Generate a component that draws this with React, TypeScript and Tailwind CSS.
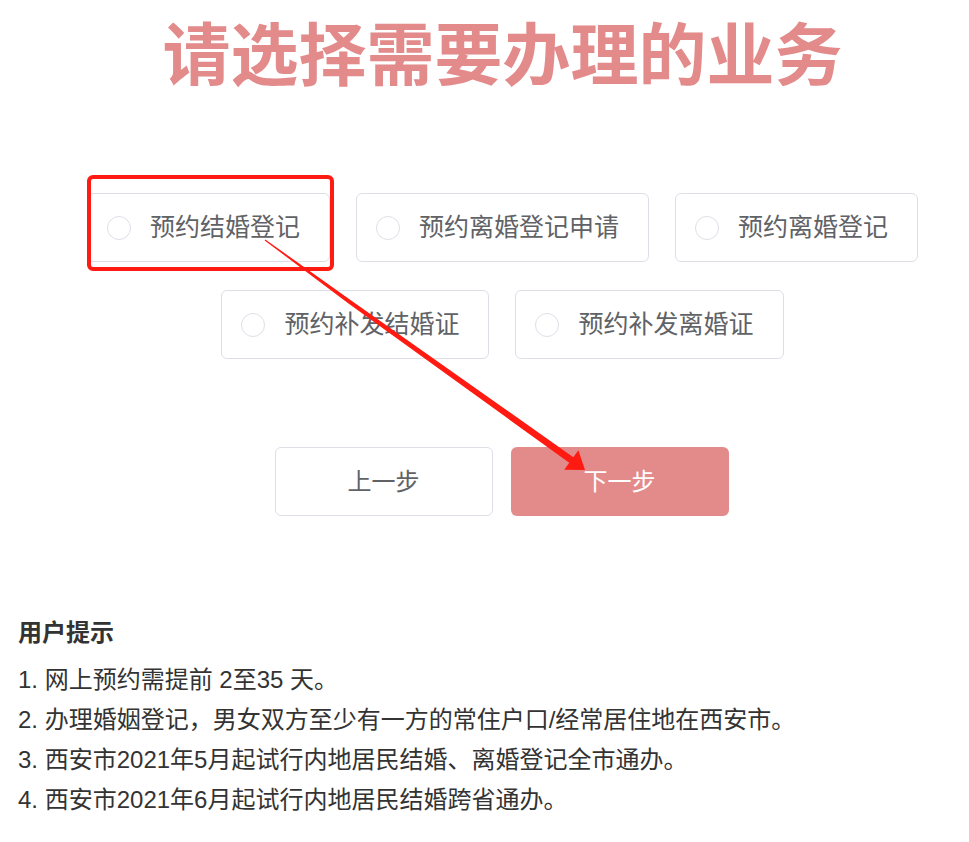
import { useState } from "react";

const options = [
  ["预约结婚登记", "预约离婚登记申请", "预约离婚登记"],
  ["预约补发结婚证", "预约补发离婚证"],
];

const tips = [
  "1. 网上预约需提前 2至35 天。",
  "2. 办理婚姻登记，男女双方至少有一方的常住户口/经常居住地在西安市。",
  "3. 西安市2021年5月起试行内地居民结婚、离婚登记全市通办。",
  "4. 西安市2021年6月起试行内地居民结婚跨省通办。",
];

function Option({ label, checked, onPick }: { label: string; checked: boolean; onPick: () => void }) {
  return (
    <button
      onClick={onPick}
      className="h-[69px] flex items-center pl-[19px] pr-[29px] border border-[#dcdfe6] rounded-[6px] bg-white"
    >
      <span
        className={
          "w-[24px] h-[24px] rounded-full " +
          (checked ? "border-[7px] border-[#e38b8b]" : "border border-[#dcdfe6]")
        }
      />
      <span className="ml-[19px] text-[25px] text-[#606266] leading-none">{label}</span>
    </button>
  );
}

export default function App() {
  const [picked, setPicked] = useState("");

  return (
    <div
      className="relative w-full min-h-[842px] bg-white"
      style={{ fontFamily: '"Liberation Sans", "Noto Sans CJK SC", sans-serif' }}
    >
      <main className="flex flex-col items-center pl-[36px] pt-[15px]">
        <h1 className="text-[68px] leading-[82px] font-bold text-[#e38b8b]">请选择需要办理的业务</h1>

        <section className="mt-[96px] flex flex-col items-center gap-[28px]">
          {options.map((row, i) => (
            <div key={i} className="flex gap-[26px]">
              {row.map((o) => (
                <Option key={o} label={o} checked={picked === o} onPick={() => setPicked(o)} />
              ))}
            </div>
          ))}
        </section>

        <section className="mt-[88px] -ml-[2px] flex gap-[18px]">
          <button className="w-[218px] h-[69px] rounded-[6px] border border-[#dcdfe6] bg-white text-[24px] text-[#606266]">
            上一步
          </button>
          <button className="w-[218px] h-[69px] rounded-[6px] bg-[#e38b8b] text-[24px] text-white">下一步</button>
        </section>
      </main>

      <section className="mt-[100px] px-[18px] text-[#333]">
        <h2 className="text-[24px] font-bold leading-[34px]">用户提示</h2>
        <ul className="mt-[10px]">
          {tips.map((t) => (
            <li key={t} className="text-[24px] leading-[40px]">
              {t}
            </li>
          ))}
        </ul>
      </section>

      {/* annotation overlay */}
      <svg className="absolute left-0 top-0 pointer-events-none" width="969" height="842">
        <rect x="89" y="177" width="243" height="92" rx="4" fill="none" stroke="#ff1a12" strokeWidth="4" />
        <polygon
          fill="#ff1a12"
          points="264.65,240.48 348.82,303.72 569.23,462.83 564.22,469.7 585,470 578.38,450.3 573.37,457.17 351.18,300.48 265.35,239.52"
        />
      </svg>
    </div>
  );
}
